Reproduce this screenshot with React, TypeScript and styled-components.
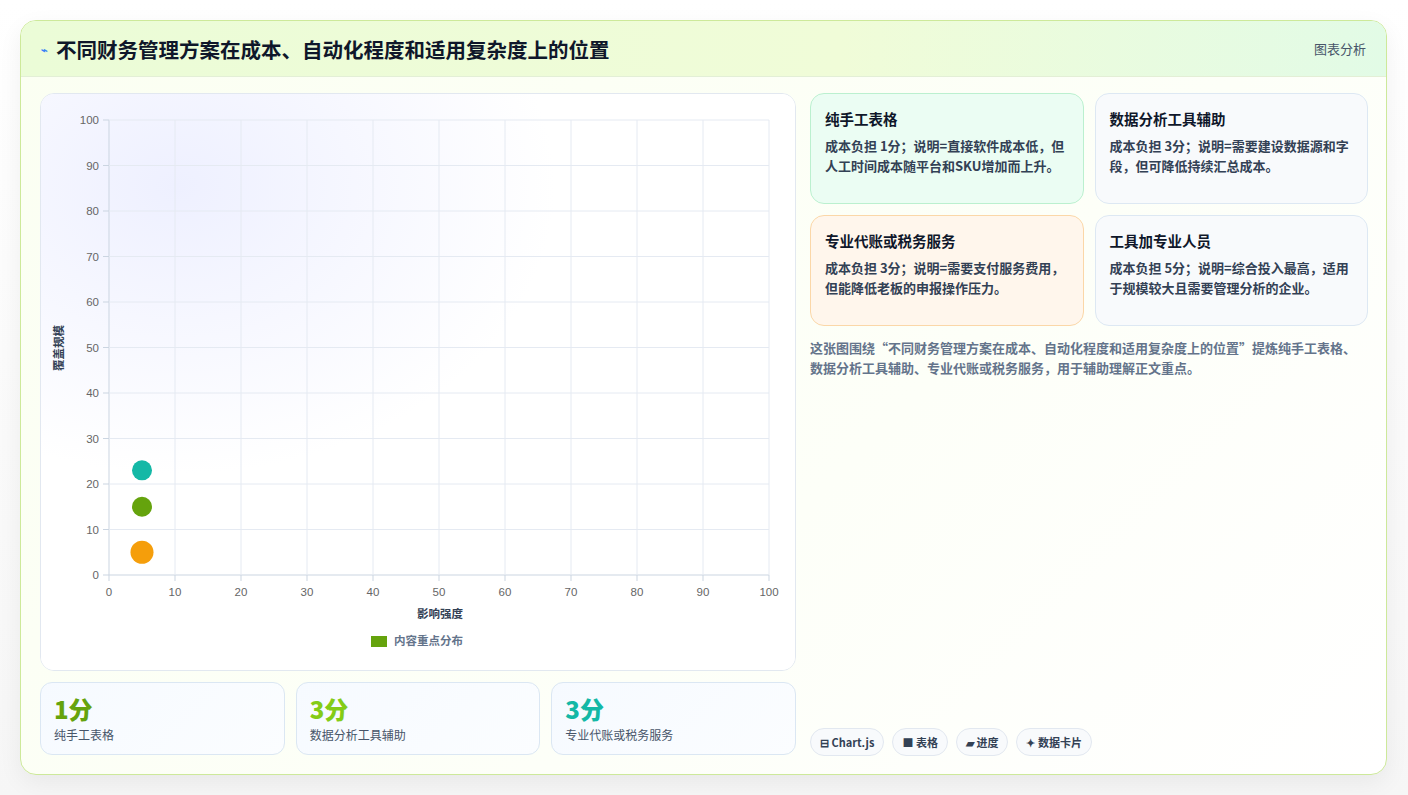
import styled, { createGlobalStyle } from "styled-components";

const Global = createGlobalStyle`
  body {
    margin: 0;
    background: linear-gradient(180deg, #ffffff 0%, #f6f6f6 100%);
    font-family: "Noto Sans CJK SC", "Noto Sans", sans-serif;
    color: #0f172a;
  }
`;

const Page = styled.div`
  width: 1408px;
  height: 795px;
  padding: 20px 21px 22px 20px;
  box-sizing: border-box;
`;

const Card = styled.div`
  height: 100%;
  border: 1px solid #cde99a;
  border-radius: 16px;
  background: linear-gradient(135deg, #fbfff2 0%, #fdfff8 60%, #ffffff 100%);
  box-shadow: 0 8px 24px rgba(0, 0, 0, 0.06);
  display: flex;
  flex-direction: column;
  overflow: hidden;
`;

const Header = styled.div`
  height: 55px;
  flex: none;
  display: flex;
  align-items: center;
  justify-content: space-between;
  padding: 0 20px 0 20px;
  background: linear-gradient(90deg, #ebfcd7 0%, #f0fcd8 60%, #e2fbe6 100%);
  border-bottom: 1px solid #e3efd6;
`;

const Title = styled.h1`
  margin: 0;
  font-size: 20.5px;
  font-weight: 700;
  display: flex;
  align-items: center;
  gap: 8px;
`;

const Tag = styled.span`
  font-size: 13px;
  color: #475569;
`;

const Body = styled.div`
  flex: 1;
  display: grid;
  grid-template-columns: 756px 1fr;
  gap: 14px;
  padding: 16px 18px 18px 19px;
`;

const Left = styled.div`
  display: flex;
  flex-direction: column;
  gap: 11px;
`;

const ChartPanel = styled.div`
  height: 576px;
  border: 1px solid #e2e8f0;
  border-radius: 14px;
  background: #ffffff;
  overflow: hidden;
`;

const Stats = styled.div`
  display: grid;
  grid-template-columns: repeat(3, 1fr);
  gap: 11px;
`;

const Stat = styled.div`
  height: 73px;
  box-sizing: border-box;
  border: 1px solid #dbe7f3;
  border-radius: 12px;
  background: linear-gradient(135deg, #f6faff, #fbfdff);
  padding: 10px 13px;
`;

const StatValue = styled.div<{ $c: string }>`
  font-size: 24px;
  font-weight: 800;
  line-height: 32px;
  color: ${(p) => p.$c};
`;

const StatLabel = styled.div`
  font-size: 12px;
  color: #475569;
  margin-top: 1px;
`;

const Right = styled.div`
  display: flex;
  flex-direction: column;
`;

const Grid = styled.div`
  display: grid;
  grid-template-columns: 1fr 1fr;
  gap: 11px 11px;
`;

const Info = styled.div<{ $bg: string; $bd: string }>`
  height: 111px;
  box-sizing: border-box;
  border: 1px solid ${(p) => p.$bd};
  border-radius: 14px;
  background: ${(p) => p.$bg};
  padding: 14px 14px;
`;

const InfoTitle = styled.div`
  font-size: 14.5px;
  font-weight: 700;
  margin-bottom: 7px;
`;

const InfoText = styled.div`
  font-size: 13px;
  line-height: 20px;
  font-weight: 600;
  color: #334155;
`;

const Caption = styled.p`
  margin: 12px 0 0;
  font-size: 13px;
  line-height: 20px;
  font-weight: 600;
  color: #64748b;
  flex: 1;
`;

const Chips = styled.div`
  display: flex;
  gap: 8px;
`;

const Chip = styled.span`
  font-size: 11px;
  font-weight: 700;
  color: #334155;
  padding: 5px 9px;
  border: 1px solid #e2e8f0;
  border-radius: 999px;
  background: #f8fafc;
`;

const L = 68, T = 26, W = 660, H = 455;

function Chart() {
  const ticks = Array.from({ length: 11 }, (_, i) => i * 10);
  const px = (v: number) => L + (v / 100) * W;
  const py = (v: number) => T + H - (v / 100) * H;
  return (
    <svg width="756" height="576" fontFamily="Liberation Sans, sans-serif">
      <defs>
        <radialGradient id="glow" cx="0.18" cy="0.16" r="0.5">
          <stop offset="0" stopColor="#eef0ff" />
          <stop offset="1" stopColor="#ffffff" />
        </radialGradient>
      </defs>
      <rect width="756" height="576" fill="url(#glow)" />
      {ticks.map((t) => (
        <g key={t}>
          <line x1={L} x2={L + W} y1={py(t)} y2={py(t)} stroke={t === 0 ? "#cbd5e1" : "#e5eaf2"} />
          <line y1={T} y2={T + H} x1={px(t)} x2={px(t)} stroke={t === 0 ? "#cbd5e1" : "#e5eaf2"} />
          <line x1={L - 6} x2={L} y1={py(t)} y2={py(t)} stroke="#cbd5e1" />
          <line y1={T + H} y2={T + H + 6} x1={px(t)} x2={px(t)} stroke="#cbd5e1" />
          <text x={L - 10} y={py(t) + 4} fontSize="11.5" fill="#666666" textAnchor="end">{t}</text>
          <text x={px(t)} y={T + H + 21} fontSize="11.5" fill="#666666" textAnchor="middle">{t}</text>
        </g>
      ))}
      <text x={399} y={524} fontSize="11.5" fontWeight="700" fill="#334155" textAnchor="middle" fontFamily="Noto Sans CJK SC">影响强度</text>
      <text transform="translate(22 254) rotate(-90)" fontSize="11.5" fontWeight="700" fill="#334155" textAnchor="middle" fontFamily="Noto Sans CJK SC">覆盖规模</text>
      <circle cx={px(5)} cy={py(23)} r="10" fill="#14b8a6" />
      <circle cx={px(5)} cy={py(15)} r="10" fill="#65a30d" />
      <circle cx={px(5)} cy={py(5)} r="11.5" fill="#f59e0b" />
      <rect x="330" y="542" width="16" height="11" fill="#65a30d" />
      <text x="353" y="551" fontSize="11.5" fontWeight="600" fill="#64748b" fontFamily="Noto Sans CJK SC">内容重点分布</text>
    </svg>
  );
}

export default function App() {
  return (
    <Page>
      <Global />
      <Card>
        <Header>
          <Title>
            <span style={{ fontSize: 11, color: "#3b82f6" }}>⌁</span>
            不同财务管理方案在成本、自动化程度和适用复杂度上的位置
          </Title>
          <Tag>图表分析</Tag>
        </Header>
        <Body>
          <Left>
            <ChartPanel>
              <Chart />
            </ChartPanel>
            <Stats>
              <Stat>
                <StatValue $c="#65a30d">1分</StatValue>
                <StatLabel>纯手工表格</StatLabel>
              </Stat>
              <Stat>
                <StatValue $c="#84cc16">3分</StatValue>
                <StatLabel>数据分析工具辅助</StatLabel>
              </Stat>
              <Stat>
                <StatValue $c="#14b8a6">3分</StatValue>
                <StatLabel>专业代账或税务服务</StatLabel>
              </Stat>
            </Stats>
          </Left>
          <Right>
            <Grid>
              <Info $bg="#ebfdf3" $bd="#bbf0cf">
                <InfoTitle>纯手工表格</InfoTitle>
                <InfoText>成本负担 1分；说明=直接软件成本低，但人工时间成本随平台和SKU增加而上升。</InfoText>
              </Info>
              <Info $bg="#f8fafc" $bd="#dde8f3">
                <InfoTitle>数据分析工具辅助</InfoTitle>
                <InfoText>成本负担 3分；说明=需要建设数据源和字段，但可降低持续汇总成本。</InfoText>
              </Info>
              <Info $bg="#fff6ec" $bd="#fbd7a8">
                <InfoTitle>专业代账或税务服务</InfoTitle>
                <InfoText>成本负担 3分；说明=需要支付服务费用，但能降低老板的申报操作压力。</InfoText>
              </Info>
              <Info $bg="#f8fafc" $bd="#dde8f3">
                <InfoTitle>工具加专业人员</InfoTitle>
                <InfoText>成本负担 5分；说明=综合投入最高，适用于规模较大且需要管理分析的企业。</InfoText>
              </Info>
            </Grid>
            <Caption>
              这张图围绕“不同财务管理方案在成本、自动化程度和适用复杂度上的位置”提炼纯手工表格、数据分析工具辅助、专业代账或税务服务，用于辅助理解正文重点。
            </Caption>
            <Chips>
              <Chip>⊟ Chart.js</Chip>
              <Chip>■ 表格</Chip>
              <Chip>▰ 进度</Chip>
              <Chip>✦ 数据卡片</Chip>
            </Chips>
          </Right>
        </Body>
      </Card>
    </Page>
  );
}
